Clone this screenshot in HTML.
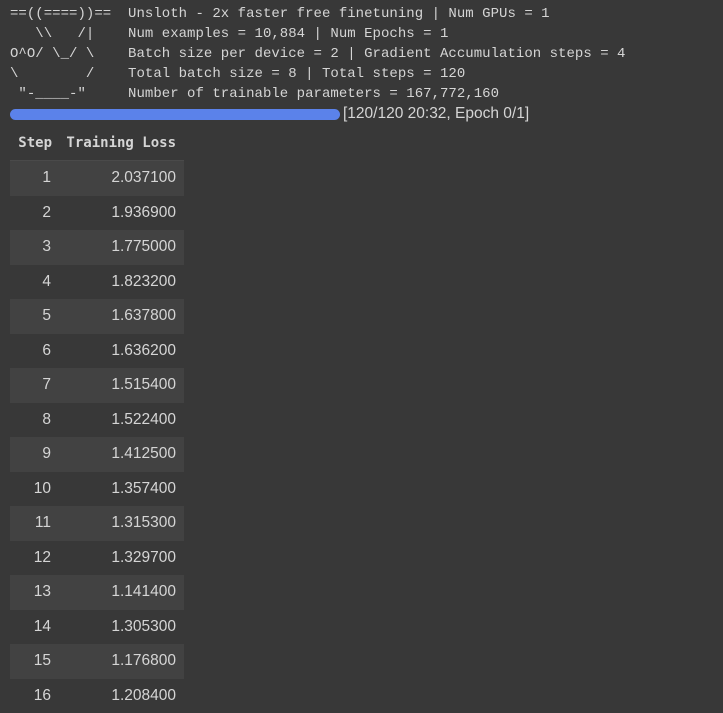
<!DOCTYPE html>
<html><head><style>
body{margin:0;background:#383838;width:723px;height:696px;overflow:hidden;color:#d5d5d5;}
pre{position:absolute;left:10px;top:4px;margin:0;font:14px/20px "Liberation Mono",monospace;letter-spacing:0.03px;color:#d5d5d5;}
.bar{position:absolute;left:10px;top:109px;width:330px;height:11px;border-radius:6px;background:#5b82ea;}
.pt{position:absolute;left:343px;top:105px;font:15.5px/18px "Liberation Sans",sans-serif;color:#d5d5d5;}
table{position:absolute;left:10px;top:130px;width:174px;table-layout:fixed;border-collapse:collapse;font:15.5px "Liberation Sans",sans-serif;color:#d5d5d5;}
th{font:bold 14px "DejaVu Sans Mono","Liberation Mono",monospace;height:26px;padding:0 8px 4px 0;text-align:right;white-space:nowrap;border-bottom:1px solid #4a4a4a;}
th:first-child{padding-right:10px}
td{height:34.5px;padding:0 8px 0 0;text-align:right;}
td:first-child{padding-right:11px}
col.a{width:52px}
tr:nth-child(even) td{background:#424242;}
</style></head><body>
<pre>==((====))==  Unsloth - 2x faster free finetuning | Num GPUs = 1
   \\   /|    Num examples = 10,884 | Num Epochs = 1
O^O/ \_/ \    Batch size per device = 2 | Gradient Accumulation steps = 4
\        /    Total batch size = 8 | Total steps = 120
 "-____-"     Number of trainable parameters = 167,772,160</pre>
<div class="bar"></div>
<div class="pt">[120/120 20:32, Epoch 0/1]</div>
<table>
<colgroup><col class="a"><col></colgroup>
<tr><th>Step</th><th>Training Loss</th></tr>
<tr><td>1</td><td>2.037100</td></tr>
<tr><td>2</td><td>1.936900</td></tr>
<tr><td>3</td><td>1.775000</td></tr>
<tr><td>4</td><td>1.823200</td></tr>
<tr><td>5</td><td>1.637800</td></tr>
<tr><td>6</td><td>1.636200</td></tr>
<tr><td>7</td><td>1.515400</td></tr>
<tr><td>8</td><td>1.522400</td></tr>
<tr><td>9</td><td>1.412500</td></tr>
<tr><td>10</td><td>1.357400</td></tr>
<tr><td>11</td><td>1.315300</td></tr>
<tr><td>12</td><td>1.329700</td></tr>
<tr><td>13</td><td>1.141400</td></tr>
<tr><td>14</td><td>1.305300</td></tr>
<tr><td>15</td><td>1.176800</td></tr>
<tr><td>16</td><td>1.208400</td></tr>
</table>
</body></html>
